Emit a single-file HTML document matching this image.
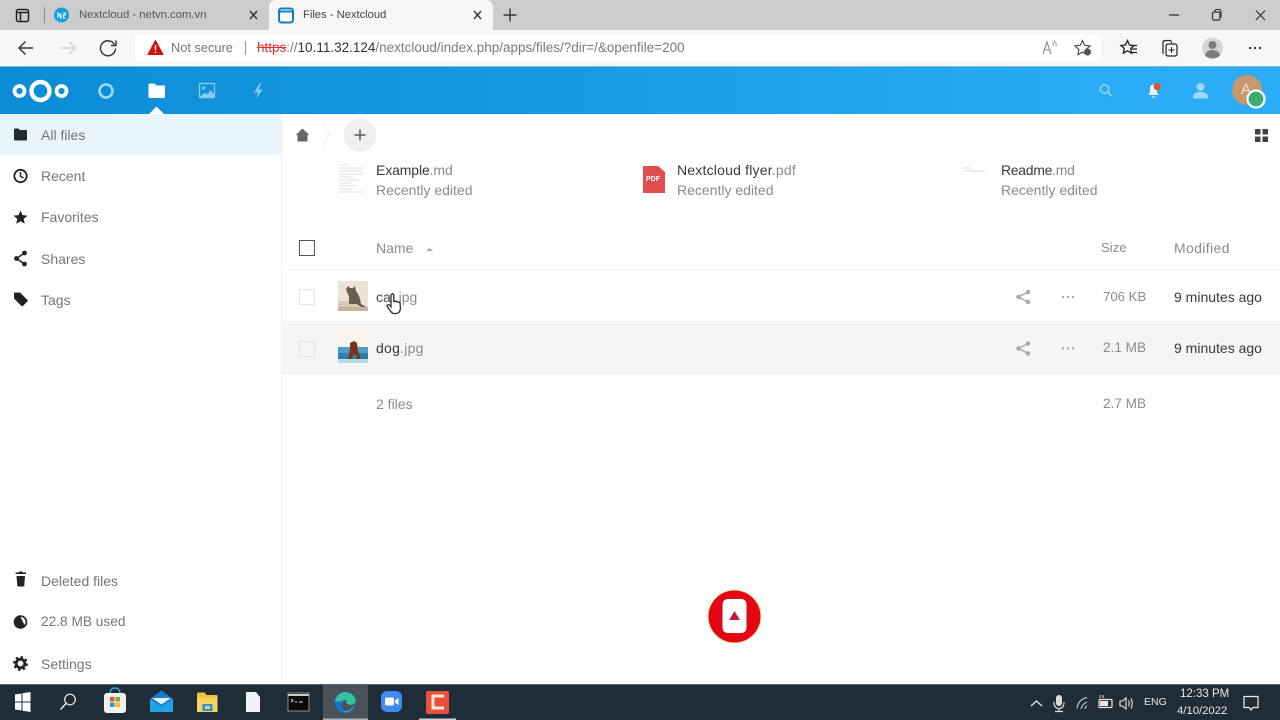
<!DOCTYPE html>
<html><head><meta charset="utf-8"><title>Files - Nextcloud</title>
<style>
*{box-sizing:border-box}
html{background:#fff}
html,body{margin:0;padding:0;width:1280px;height:720px;overflow:hidden;font-family:"Liberation Sans",sans-serif}
body{background:#fff;filter:blur(.35px)}
.t{position:absolute;white-space:nowrap;font-size:14px;line-height:18px;color:#767676}
.d{color:#3a3a3a}
.g{color:#8b8b8b}
.b{position:absolute}
svg{position:absolute;overflow:visible}
</style></head><body>

<!-- Tab strip -->
<div class="b" style="left:0;top:0;width:1280px;height:30px;background:#cccccc"></div>
<div class="b" style="left:269px;top:0;width:224px;height:31px;background:#f7f7f7;border-radius:7px 7px 0 0"></div>
<svg style="left:0;top:0" width="1280" height="30">
 <rect x="16.500" y="9.500" width="12" height="12" rx="2" fill="none" stroke="#222" stroke-width="1.500"/><path d="M17 12.500h11M20.500 12.500v8" stroke="#222" stroke-width="1.500" fill="none"/>
 <path d="M44.500 7v16" stroke="#8d8d8d"/>
 <circle cx="61.500" cy="15" r="7.500" fill="#12a0dc"/><path d="M58 18v-5l3 5v-5M63 13h2.500v2h-2v3h2" stroke="#fff" fill="none"/>
 <path d="M250 11l7 8M257 11l-7 8M474 11l7 8M481 11l-7 8" stroke="#333" stroke-width="1.400"/>
 <rect x="279" y="8.500" width="14" height="14" rx="2.500" fill="#fff" stroke="#0f7fbf" stroke-width="2"/><path d="M279 11.500h14" stroke="#0f7fbf" stroke-width="2"/>
 <path d="M510 8.500v13M503.500 15h13" stroke="#333" stroke-width="1.400"/>
 <path d="M1169 15h10" stroke="#333" stroke-width="1.300"/>
 <rect x="1212.500" y="12" width="7.500" height="8" rx="1.500" fill="none" stroke="#333" stroke-width="1.200"/><path d="M1215 12v-1.500q0-1 1-1h3q2 0 2 2v5q0 1-1 1" fill="none" stroke="#333" stroke-width="1.100"/>
 <path d="M1256 10.500l9 9.500M1265 10.500l-9 9.500" stroke="#333" stroke-width="1.200"/>
</svg>
<div class="t" style="left:79px;top:6px;font-size:11.300px;color:#555">Nextcloud - netvn.com.vn</div>
<div class="t" style="left:303px;top:6px;font-size:11.200px;color:#444">Files - Nextcloud</div>

<!-- Toolbar -->
<div class="b" style="left:0;top:30px;width:1280px;height:36px;background:#f7f7f7"></div>
<div class="b" style="left:135px;top:34px;width:966px;height:28px;background:#fff;border-radius:4px"></div>
<svg style="left:0;top:30px" width="1280" height="36">
 <path d="M33 18H19M25.500 11.500L19 18l6.500 6.500" fill="none" stroke="#333" stroke-width="1.400"/>
 <path d="M75 18H60M69 11.500l6.500 6.500-6.500 6.500" fill="none" stroke="#d4d4d4" stroke-width="1.400"/>
 <path d="M114.500 14.500a7.500 7.500 0 1 0 1 4M116 10.500v5h-5" fill="none" stroke="#333" stroke-width="1.400"/>
 <path d="M155.500 10.500l7.500 14h-15z" fill="#d20f0f" stroke="#d20f0f" stroke-linejoin="round"/><path d="M155.500 15v5M155.500 21.500v1.500" stroke="#fff" stroke-width="1.400"/>
 <path d="M245.500 11v14" stroke="#999"/>
 <path d="M1043 24l4-12 4 12M1044.500 20h5.500" fill="none" stroke="#888" stroke-width="1.100"/><path d="M1052 12q2 2 1.500 4M1054 10.500q3 3 2 6" fill="none" stroke="#999"/>
 <path d="M1082.500 10.500l2.200 4.800 5.300.6-3.900 3.600 1 5.200-4.600-2.600-4.600 2.600 1-5.200-3.900-3.600 5.300-.6z" fill="#fbfbfb" stroke="#444" stroke-width="1.100"/><circle cx="1087.500" cy="22" r="3.500" fill="#555"/>
 <path d="M1127.500 10.500l2 4.500 4.500.5-3.300 3 .9 4.700-4.100-2.400-4.100 2.400.9-4.700-3.300-3 4.500-.5zM1131 15.500h6M1132 19h5M1131.500 22.500h5.500" fill="none" stroke="#222" stroke-width="1.300"/>
 <path d="M1163 24v-11q0-2.500 2.500-2.500h5l1.500 2.500" fill="none" stroke="#222" stroke-width="1.200"/><rect x="1166" y="14" width="11" height="12" rx="2" fill="#f7f7f7" stroke="#222" stroke-width="1.200"/><path d="M1171.500 17v6M1168.500 20h6" stroke="#222"/>
 <circle cx="1212.500" cy="18" r="10.500" fill="#d5d5d5"/><circle cx="1212.500" cy="15" r="4" fill="#7e7e7e"/><path d="M1205 25.500q1-5.500 7.500-5.500t7.500 5.500q-3 3-7.500 3t-7.500-3z" fill="#7e7e7e"/>
 <circle cx="1250" cy="18" r="1.100" fill="#222"/><circle cx="1255" cy="18" r="1.100" fill="#222"/><circle cx="1260" cy="18" r="1.100" fill="#222"/>
</svg>
<div class="t" style="left:171px;top:39px;font-size:12.800px;color:#767676">Not secure</div>
<div class="t" style="left:257px;top:39px;font-size:13.500px;color:#7a7a7a"><span style="color:#d33;text-decoration:line-through">https</span>://<span style="color:#333">10.11.32.124</span>/nextcloud/index.php/apps/files/?dir=/&amp;openfile=200</div>

<!-- Nextcloud header -->
<div class="b" style="left:0;top:66px;width:1280px;height:48px;background:linear-gradient(90deg,#0b8cd4 0%,#1898e0 40%,#2aabf6 85%,#2cacf7 100%);border-top:1px solid #8fb9d4"></div>
<svg style="left:0;top:66px" width="1280" height="48">
 <circle cx="40.500" cy="25" r="9" fill="none" stroke="#fff" stroke-width="4.400"/>
 <circle cx="19.500" cy="25" r="5" fill="none" stroke="#fff" stroke-width="3.800"/>
 <circle cx="61.500" cy="25" r="5" fill="none" stroke="#fff" stroke-width="3.800"/>
 <circle cx="106" cy="25" r="6.500" fill="none" stroke="#9fd8f8" stroke-width="2.600"/>
 <path d="M148.500 19q0-1.500 1.500-1.500h4.500l2 2h7.500q1 0 1 1V31q0 1-1 1h-14.500q-1 0-1-1z" fill="#fff"/>
 <path d="M149 48l7.500-7.500 7.500 7.500z" fill="#fff"/>
 <rect x="199.500" y="17.500" width="15" height="14" rx="1" fill="none" stroke="#84c9f1" stroke-width="1.400"/><circle cx="203.500" cy="22" r="1.600" fill="#84c9f1"/><path d="M200 31l4.500-4.500 2.500 2 3.500-4.500 3.500 4v3z" fill="#84c9f1"/>
 <path d="M260 17l-6 9.500h4l-2 6.500 6.500-9.500h-4l3-6.500z" fill="#84c9f1"/>
 <circle cx="1104.500" cy="23" r="4.200" fill="none" stroke="#8fd2f8" stroke-width="1.600"/><path d="M1107.500 26l4 4" stroke="#8fd2f8" stroke-width="1.800"/>
 <path d="M1153.500 18.500q3.500 0 3.500 4v4l1.500 2.500h-10l1.500-2.500v-4q0-4 3.500-4z" fill="#e8f6fe"/><path d="M1151.500 30.500h4l-2 1.800z" fill="#e8f6fe"/><circle cx="1157" cy="20.500" r="3.500" fill="#e8501f"/>
 <circle cx="1200.500" cy="21" r="4" fill="#9ed8fa"/><path d="M1193 31q0-5 7.500-5t7.500 5v1.500h-15z" fill="#9ed8fa"/>
 <circle cx="1247" cy="24" r="15" fill="#c9976d"/>
</svg>
<div class="t" style="left:1241px;top:81px;font-size:15px;color:#f0ddd0">A</div>
<svg style="left:1240px;top:84px" width="32" height="32"><circle cx="16" cy="15" r="8.500" fill="#3eab74" stroke="#fff" stroke-width="2.200"/></svg>

<!-- Sidebar -->
<div class="b" style="left:0;top:114px;width:281px;height:41px;background:#e9f5fd"></div>
<div class="b" style="left:281px;top:114px;width:1px;height:570px;background:#f2f2f2"></div>
<svg style="left:0;top:114px" width="282" height="570">
 <path d="M14 15.500q0-1 1-1h3.500l1.500 1.500h6q1 0 1 1v8.500q0 1-1 1H15q-1 0-1-1z" fill="#222c36"/>
 <circle cx="20.500" cy="62" r="6.200" fill="none" stroke="#222" stroke-width="1.800"/><path d="M20.500 58v4.300l3 1.700" fill="none" stroke="#222" stroke-width="1.500"/>
 <path d="M20.500 96.500l2 4.600 5 .5-3.800 3.300 1.100 4.900-4.300-2.600-4.300 2.600 1.100-4.900-3.800-3.300 5-.5z" fill="#222"/>
 <circle cx="24.500" cy="139" r="2.400" fill="#222"/><circle cx="16.500" cy="144.500" r="2.400" fill="#222"/><circle cx="24.500" cy="150" r="2.400" fill="#222"/><path d="M24.500 139l-8 5.500 8 5.500" fill="none" stroke="#222" stroke-width="1.500"/>
 <path d="M14 179.500q0-1 1-1h5l7.500 7.500q.7.700 0 1.400l-4.600 4.600q-.7.700-1.400 0L14 184.500z" fill="#222"/>
 <path d="M16.500 462h8.500l-.7 9.500q0 1-1 1h-5q-1 0-1-1zM15.500 460h10.500v-1.500h-3l-1-1h-2.500l-1 1h-3z" fill="#222"/>
 <circle cx="20.500" cy="508" r="6.800" fill="#222"/><path d="M20.500 503a5 5 0 0 1 4 8z" fill="#fff"/>
 <circle cx="20.500" cy="549.500" r="4.300" fill="none" stroke="#222" stroke-width="2.800"/><circle cx="20.500" cy="549.500" r="6.400" fill="none" stroke="#222" stroke-width="2" stroke-dasharray="2.500 2.500"/>
</svg>
<div class="t" style="left:41px;top:126px">All files</div>
<div class="t" style="left:41px;top:167px">Recent</div>
<div class="t" style="left:41px;top:208px">Favorites</div>
<div class="t" style="left:41px;top:250px">Shares</div>
<div class="t" style="left:41px;top:291px">Tags</div>
<div class="t" style="left:41px;top:572px">Deleted files</div>
<div class="t" style="left:41px;top:613px;font-size:13.700px">22.8 MB used</div>
<div class="t" style="left:41px;top:655px">Settings</div>

<!-- Breadcrumb -->
<svg style="left:282px;top:114px" width="998" height="60">
 <path d="M20.500 14.500l6.800 6.500h-1.800v6.500h-10V21h-1.800z" fill="#666"/>
 <path d="M41 10l6 11-6 11" fill="none" stroke="#eee" stroke-width="1.200"/>
 <circle cx="78" cy="21" r="16.500" fill="#f0f0f0"/>
 <path d="M78 15.500v11M72.500 21h11" stroke="#555" stroke-width="1.500"/>
 <path d="M973 15h5.500v5.500H973zM980.500 15h5.500v5.500h-5.500zM973 22.500h5.500V28H973zM980.500 22.500h5.500V28h-5.500z" fill="#444"/>
</svg>

<!-- Recent previews -->
<svg style="left:336px;top:160px" width="32" height="40">
 <path d="M3 5h8M3 8h24M3 11h22M3 14h25M3 17h15M3 20h20M3 23h12M3 26h18M3 29h14M3 32h24" stroke="#e6e6e6" stroke-width="1.300"/>
</svg>
<div class="t d" style="left:376px;top:161px;letter-spacing:-.12px">Example<span class="g">.md</span></div>
<div class="t g" style="left:376px;top:181px">Recently edited</div>

<svg style="left:642px;top:165px" width="24" height="30">
 <path d="M1 1h15l7 6v21H1z" fill="#e04e4e"/>
</svg>
<div class="t" style="left:646px;top:175px;font-size:7px;line-height:9px;color:#fff;font-weight:bold">PDF</div>
<div class="t d" style="left:677px;top:161px;letter-spacing:.2px">Nextcloud flyer<span class="g">.pdf</span></div>
<div class="t g" style="left:677px;top:181px">Recently edited</div>

<svg style="left:960px;top:165px" width="30" height="10"><path d="M3 3h8M3 6h22" stroke="#e2e2e2" stroke-width="1.300"/></svg>
<div class="t d" style="left:1001px;top:161px;letter-spacing:-.3px">Readme<span class="g">.md</span></div>
<div class="t g" style="left:1001px;top:181px">Recently edited</div>

<!-- File table -->
<div class="b" style="left:299px;top:240px;width:16px;height:16px;border:1.500px solid #555"></div>
<div class="t g" style="left:376px;top:239px">Name</div>
<svg style="left:425px;top:246px" width="10" height="6"><path d="M1 5l3.500-3 3.500 3z" fill="#aaa"/></svg>
<div class="t g" style="left:1101px;top:239px;font-size:13.200px">Size</div>
<div class="t g" style="left:1174px;top:239px;letter-spacing:.35px">Modified</div>

<div class="b" style="left:282px;top:269px;width:998px;height:1px;background:#f4f4f4"></div>
<div class="b" style="left:282px;top:321px;width:998px;height:53px;background:#f5f5f5;border-bottom:1px solid #eee"></div>

<div class="b" style="left:299px;top:289px;width:16px;height:16px;border:1px solid #e6e6e6;background:#fff"></div>
<div class="b" style="left:299px;top:341px;width:16px;height:16px;border:1px solid #e2e2e2;background:#f5f5f5"></div>

<!-- cat thumb -->
<svg style="left:338px;top:281px" width="30" height="30">
 <rect width="30" height="30" fill="#ece2d6"/><rect y="20" width="22" height="10" fill="#d8c8b6"/><rect y="26" width="30" height="4" fill="#c4b19c"/>
 <path d="M8 8l2-3 2 2 3 0 2-2 1 5q4 5 5 13l5 3h-5l-4-3h-8v-8q-2-3-3-7z" fill="#6a5d52"/>
</svg>
<!-- dog thumb -->
<svg style="left:338px;top:333px" width="30" height="30">
 <rect width="30" height="30" fill="#f8f4ee"/><rect y="14" width="30" height="6" fill="#4e9cc8"/><rect y="20" width="30" height="6" fill="#2f7fae"/><rect y="26" width="30" height="4" fill="#b5dcee"/>
 <path d="M12 10l4-2 3 2 1 8 3 8h-4l-1-4h-3l-1 4h-4l2-9z" fill="#7c3418"/>
</svg>

<div class="t" style="left:376px;top:288px;color:#8b8b8b"><span style="color:#4a4a4a">cat</span>.jpg</div>
<div class="t" style="left:376px;top:339px;color:#8b8b8b;letter-spacing:.25px"><span style="color:#3a3a3a">dog</span>.jpg</div>

<svg style="left:386px;top:293px" width="20" height="24">
 <path d="M5 2.500q0-1.500 1.400-1.500t1.400 1.500V9l.3-.8q1.300-.7 2 .5 1.300-.6 2 .6 1.400-.5 2 .8l.3 5q0 5-4.500 5.500-3.500.3-5-2L1.500 14q-1-1.700.5-2.300 1.200-.3 3 2z" fill="#fff" stroke="#2f2f2f" stroke-width="1.300"/>
</svg>

<svg style="left:1010px;top:285px" width="72" height="76">
 <g fill="#a8a8a8">
  <circle cx="18" cy="7" r="2.200"/><circle cx="8.500" cy="12" r="2.200"/><circle cx="18" cy="17" r="2.200"/>
  <circle cx="18" cy="58.500" r="2.200"/><circle cx="8.500" cy="63.500" r="2.200"/><circle cx="18" cy="68.500" r="2.200"/>
  <circle cx="53" cy="12" r="1.200"/><circle cx="58" cy="12" r="1.200"/><circle cx="63" cy="12" r="1.200"/>
  <circle cx="53" cy="63.500" r="1.200"/><circle cx="58" cy="63.500" r="1.200"/><circle cx="63" cy="63.500" r="1.200"/>
 </g>
 <path d="M18 7l-9.500 5 9.500 5M18 58.500l-9.500 5 9.500 5" fill="none" stroke="#a8a8a8" stroke-width="1.500"/>
</svg>
<div class="t g" style="left:1103px;top:288px;font-size:13.200px">706 KB</div>
<div class="t d" style="left:1174px;top:288px">9 minutes ago</div>
<div class="t g" style="left:1103px;top:339px;font-size:13.600px">2.1 MB</div>
<div class="t d" style="left:1174px;top:339px">9 minutes ago</div>
<div class="t g" style="left:376px;top:395px">2 files</div>
<div class="t g" style="left:1103px;top:395px;font-size:13.600px">2.7 MB</div>

<!-- Red record button -->
<svg style="left:705px;top:587px" width="60" height="60">
 <circle cx="29.500" cy="29.500" r="26.500" fill="#e30613" stroke="#f3ecaa" stroke-width="1"/>
 <rect x="17.500" y="12" width="24" height="34" rx="5" fill="#fff"/>
 <path d="M29.500 24l5.300 9h-10.600z" fill="#c4153a"/>
</svg>

<!-- Taskbar -->
<div class="b" style="left:0;top:684px;width:1280px;height:36px;background:#1f2d38;border-top:1px solid #59636b"></div>
<div class="b" style="left:323px;top:685px;width:45px;height:35px;background:#47525b"></div>
<svg style="left:0;top:684px" width="1280" height="36">
 <path d="M15 10.500l6.500-1v8H15zM22.500 9.300l8-1.300v9.500h-8zM15 18.500h6.500v8l-6.500-1zM22.500 18.500h8V28l-8-1.300z" fill="#fff"/>
 <circle cx="70" cy="15.500" r="5.300" fill="none" stroke="#eee" stroke-width="1.200"/><path d="M66 19.500L60.500 25.500" stroke="#eee" stroke-width="1.400"/>
 <path d="M110 10q0-6 5-6t5 6" fill="none" stroke="#2aa3d8" stroke-width="1.500"/><rect x="104" y="9" width="22" height="20" rx="3" fill="#f4f1ec"/><rect x="110" y="13" width="4.500" height="4.500" fill="#e8562a"/><rect x="115.500" y="13" width="4.500" height="4.500" fill="#7fb32f"/><rect x="110" y="18.500" width="4.500" height="4.500" fill="#1f9fe0"/><rect x="115.500" y="18.500" width="4.500" height="4.500" fill="#f6b91c"/>
 <path d="M150 15l11.500-8.500L173 15v13h-23z" fill="#1a7cc9"/><path d="M150 15l11.500 8 11.500-8v13h-23z" fill="#1fa3e6"/><path d="M152 14h19l-9.500 6.500z" fill="#dff1fb"/>
 <path d="M197 10q0-1.500 1.500-1.500h6l2 2.500h10q1 0 1 1V28h-20z" fill="#f3c33d"/><rect x="197" y="14" width="20.500" height="14" fill="#f6d365"/><rect x="202.500" y="20" width="10" height="7" fill="#2f8fd0"/><rect x="205" y="22" width="5" height="3" fill="#f6d365"/>
 <path d="M246 8h10l4 5v15h-14z" fill="#eef3f9"/>
 <rect x="288" y="9" width="21" height="18" fill="#0b0b0b" stroke="#8f8f8f" stroke-width="1"/><path d="M288.500 11h20" stroke="#cfcfcf" stroke-width="2"/><path d="M291 15l2 1.500-2 1.500M295 18h2M299 18h4" stroke="#ddd" fill="none"/>
 <path d="M335 18a10.500 10.500 0 0 1 20-4q2 4-1 6-3.500 1.500-6.500 0q-3-2 0-3.500-4-1-7 1-3 3-1 7-4-2-4.500-6.500z" fill="#35c1a5"/>
 <path d="M335 18a10.500 10.500 0 0 0 15 10q-5 1-7-2.500-2-4 1-8.500-6 0-9 1z" fill="#1677c9"/>
 <path d="M355 21a10.500 10.500 0 0 1-8 7.500q-3 0-4.500-2 4 1 7-.5z" fill="#2aa1dd"/>
 <rect x="381" y="7" width="21" height="21" rx="6" fill="#3f8bf0"/><rect x="385" y="13.500" width="9" height="8" rx="1.500" fill="#fff"/><path d="M395 16.500l3.500-2.500v7l-3.500-2.500z" fill="#fff"/>
 <rect x="426" y="7" width="23" height="23" rx="2" fill="#e9503a"/><path d="M444 12h-11v12h11" fill="none" stroke="#fde4dc" stroke-width="3"/>
 <rect x="419" y="34.500" width="37" height="1.500" fill="#cfd3d6"/>
 <rect x="323" y="34.500" width="45" height="1.500" fill="#aeb4b8"/>
 <path d="M1031 22l5.500-5 5.500 5" fill="none" stroke="#e8e8e8" stroke-width="1.300"/>
 <rect x="1056" y="11" width="6" height="11" rx="3" fill="#d8dcdf"/><path d="M1054 18q0 6.500 5 6.500t5-6.500M1059 24.500v2.500M1055 27.500h8" fill="none" stroke="#d8dcdf" stroke-width="1.200"/>
 <path d="M1077 24.500q1-9 10-11M1081 25q1-5 6-7M1085 25q0-2 2-3" fill="none" stroke="#b9bfc3" stroke-width="1.200"/>
 <rect x="1099" y="15.500" width="13" height="8" rx="1" fill="none" stroke="#e8e8e8" stroke-width="1.200"/><rect x="1100" y="17" width="8" height="5" fill="#e8e8e8"/><path d="M1100 11v3M1103 11v3" stroke="#e8e8e8"/>
 <path d="M1120 17h2.500l3.500-3v11l-3.500-3H1120zM1128.500 16.500q1.500 3 0 6M1131 14.500q2.500 5 0 10" fill="none" stroke="#e8e8e8" stroke-width="1.100"/>
 <path d="M1244 12.500h14v11h-5l-2 2.500-2-2.500h-5z" fill="none" stroke="#eee" stroke-width="1.200"/>
</svg>
<div class="t" style="left:1144px;top:693px;font-size:10.500px;color:#e8e8e8">ENG</div>
<div class="t" style="left:1180px;top:685px;font-size:11.500px;color:#e8e8e8">12:33 PM</div>
<div class="t" style="left:1177px;top:702px;font-size:11.300px;color:#e8e8e8">4/10/2022</div>
</body></html>
